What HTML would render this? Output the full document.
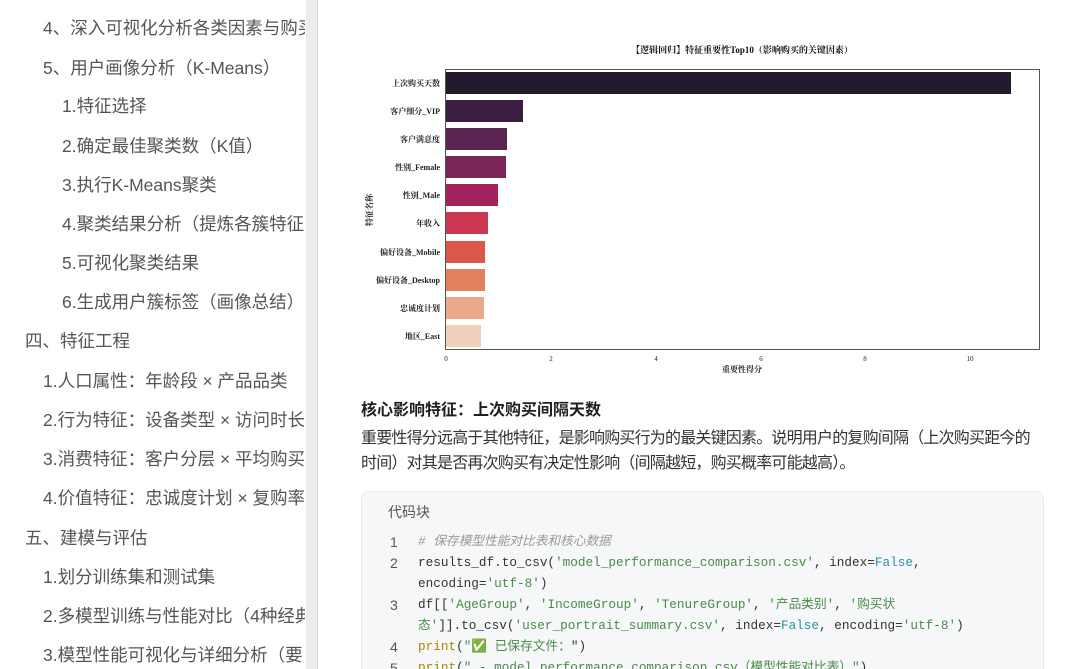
<!DOCTYPE html>
<html style="width:1080px;height:669px;overflow:hidden"><head><meta charset="utf-8"><style>
*{margin:0;padding:0;box-sizing:border-box}
body{width:1080px;height:669px;overflow:hidden;background:#fff;position:relative;font-family:"Liberation Sans","Noto Sans CJK SC",sans-serif}
#side{position:absolute;left:0;top:0;width:305px;height:669px;overflow:hidden;background:#fff}
#side div{position:absolute;white-space:nowrap;font-size:17.5px;color:#555;line-height:24px}
#sb{position:absolute;left:306px;top:0;width:12px;height:669px;background:#ececec;border-right:1px solid #d6d6d6}
.t{position:absolute;white-space:nowrap}
#code{position:absolute;left:361px;top:491px;width:683px;height:178px;background:#f6f7f8;border:1px solid #e8e9eb;border-bottom:none;border-radius:8px 8px 0 0;overflow:hidden}
.ln{position:absolute;left:28px;font-family:"Liberation Sans",sans-serif;font-size:14px;color:#555;line-height:20px}
.cd{position:absolute;left:56px;font-family:"Liberation Mono","Noto Sans CJK SC",monospace;font-size:12.7px;color:#333;white-space:nowrap;line-height:20px;height:20px}
.s{color:#4a8a4a}.k{color:#2a8fa8}.c{color:#999;font-style:italic}.f{color:#b08500}
</style></head><body>
<div id="side">
<div style="left:43px;top:16px">4、深入可视化分析各类因素与购买</div>
<div style="left:43px;top:56px">5、用户画像分析（K-Means）</div>
<div style="left:62px;top:94px">1.特征选择</div>
<div style="left:62px;top:134px">2.确定最佳聚类数（K值）</div>
<div style="left:62px;top:173px">3.执行K-Means聚类</div>
<div style="left:62px;top:212px">4.聚类结果分析（提炼各簇特征）</div>
<div style="left:62px;top:251px">5.可视化聚类结果</div>
<div style="left:62px;top:290px">6.生成用户簇标签（画像总结）</div>
<div style="left:25px;top:329px">四、特征工程</div>
<div style="left:43px;top:369px">1.人口属性：年龄段 × 产品品类</div>
<div style="left:43px;top:408px">2.行为特征：设备类型 × 访问时长</div>
<div style="left:43px;top:447px">3.消费特征：客户分层 × 平均购买</div>
<div style="left:43px;top:486px">4.价值特征：忠诚度计划 × 复购率</div>
<div style="left:25px;top:526px">五、建模与评估</div>
<div style="left:43px;top:565px">1.划分训练集和测试集</div>
<div style="left:43px;top:604px">2.多模型训练与性能对比（4种经典</div>
<div style="left:43px;top:643px">3.模型性能可视化与详细分析（要</div>
</div>
<div id="sb"></div>

<svg style="position:absolute;left:0;top:0" width="1080" height="380" font-family="Liberation Serif,Noto Serif CJK SC,serif">
<text x="742" y="53" font-size="9" font-weight="bold" text-anchor="middle" fill="#111">【逻辑回归】特征重要性Top10（影响购买的关键因素）</text>
<g>
<rect x="446" y="72" width="565" height="22" fill="#231a2e"/>
<rect x="446" y="100" width="77" height="22" fill="#3a1d40"/>
<rect x="446" y="128" width="61" height="22" fill="#5a2550"/>
<rect x="446" y="156" width="60" height="22" fill="#7a2558"/>
<rect x="446" y="184" width="52" height="22" fill="#a3225b"/>
<rect x="446" y="212" width="42" height="22" fill="#c93850"/>
<rect x="446" y="241" width="39" height="22" fill="#d9584a"/>
<rect x="446" y="269" width="39" height="22" fill="#e2815f"/>
<rect x="446" y="297" width="38" height="22" fill="#eaa98a"/>
<rect x="446" y="325" width="35" height="22" fill="#efd0bb"/>
</g>
<rect x="445.5" y="69.5" width="594" height="280" fill="none" stroke="#555" stroke-width="1"/>
<g font-size="8" fill="#222" text-anchor="end" font-weight="bold">
<text x="440" y="86">上次购买天数</text><text x="440" y="114">客户细分_VIP</text><text x="440" y="142">客户满意度</text><text x="440" y="170">性别_Female</text><text x="440" y="198">性别_Male</text><text x="440" y="226">年收入</text><text x="440" y="255">偏好设备_Mobile</text><text x="440" y="283">偏好设备_Desktop</text><text x="440" y="311">忠诚度计划</text><text x="440" y="339">地区_East</text>
</g>
<g font-size="7" fill="#222" text-anchor="middle">
<text x="446" y="361">0</text><text x="551" y="361">2</text><text x="656" y="361">4</text><text x="761" y="361">6</text><text x="865" y="361">8</text><text x="970" y="361">10</text>
</g>
<text x="742" y="372" font-size="8" font-weight="bold" text-anchor="middle" fill="#222">重要性得分</text>
<text transform="translate(372,210) rotate(-90)" font-size="8" font-weight="bold" text-anchor="middle" fill="#222">特征名称</text>
</svg>

<div class="t" style="left:361px;top:396px;font-size:16px;font-weight:bold;color:#1f1f1f">核心影响特征：上次购买间隔天数</div>
<div class="t" style="left:361px;top:426px;font-size:16px;color:#333;line-height:25px;letter-spacing:-0.8px">重要性得分远高于其他特征，是影响购买行为的最关键因素。说明用户的复购间隔（上次购买距今的<br>时间）对其是否再次购买有决定性影响（间隔越短，购买概率可能越高）。</div>

<div id="code">
<div class="t" style="left:26px;top:10px;font-size:14px;color:#555">代码块</div>
<div class="ln" style="top:40px">1</div><div class="cd c" style="top:40px"># 保存模型性能对比表和核心数据</div>
<div class="ln" style="top:61px">2</div><div class="cd" style="top:61px">results_df.to_csv(<span class="s">'model_performance_comparison.csv'</span>, index=<span class="k">False</span>,</div>
<div class="cd" style="top:82px">encoding=<span class="s">'utf-8'</span>)</div>
<div class="ln" style="top:103px">3</div><div class="cd" style="top:103px">df[[<span class="s">'AgeGroup'</span>, <span class="s">'IncomeGroup'</span>, <span class="s">'TenureGroup'</span>, <span class="s">'产品类别'</span>, <span class="s">'购买状</span></div>
<div class="cd" style="top:124px"><span class="s">态'</span>]].to_csv(<span class="s">'user_portrait_summary.csv'</span>, index=<span class="k">False</span>, encoding=<span class="s">'utf-8'</span>)</div>
<div class="ln" style="top:145px">4</div><div class="cd" style="top:145px"><span class="f">print</span>(<span class="s">"✅ 已保存文件：</span>")</div>
<div class="ln" style="top:166px">5</div><div class="cd" style="top:166px"><span class="f">print</span>(<span class="s">"  - model_performance_comparison.csv（模型性能对比表）"</span>)</div>
</div>
</body></html>
